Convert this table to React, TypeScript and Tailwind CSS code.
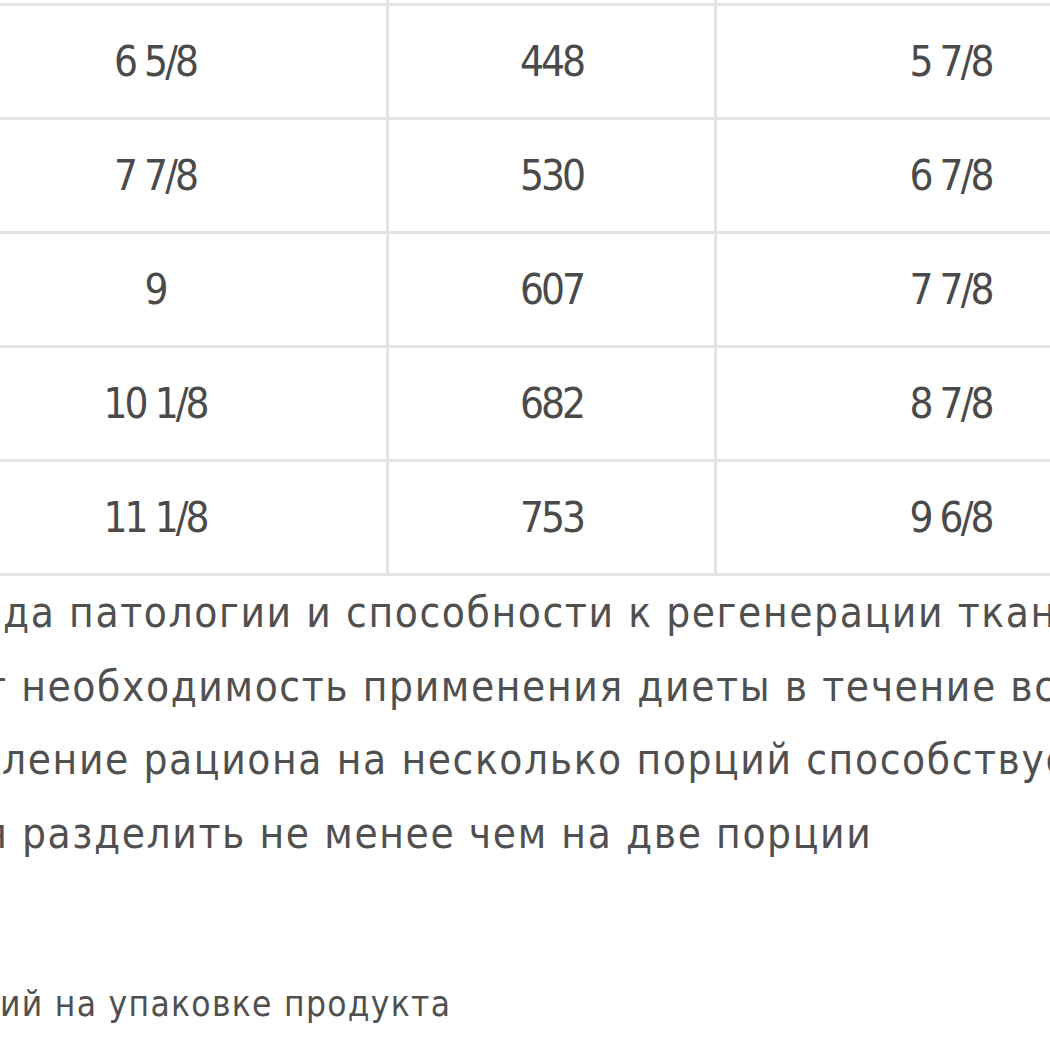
const rows: Array<[string, string, string]> = [
  ["", "", ""],
  ["6 5/8", "448", "5 7/8"],
  ["7 7/8", "530", "6 7/8"],
  ["9", "607", "7 7/8"],
  ["10 1/8", "682", "8 7/8"],
  ["11 1/8", "753", "9 6/8"],
];

const font = { fontFamily: '"DejaVu Sans Condensed", "DejaVu Sans", sans-serif' };

export default function App() {
  return (
    <div className="w-[1050px] h-[1050px] overflow-hidden bg-white text-[#4a4a4a]" style={font}>
      {/* table, clipped on both sides */}
      <div className="ml-[-76px] mt-[-108px] w-[1260px]">
        {rows.map((r, i) => (
          <div key={i} className="grid grid-cols-[465px_328px_467px] h-[114px] border-b-[3px] border-[#e4e4e4]">
            <div className="flex items-center justify-center border-r-[3px] border-[#e4e4e4] text-[42px] tracking-[-3px]">{r[0]}</div>
            <div className="flex items-center justify-center border-r-[3px] border-[#e4e4e4] text-[42px] tracking-[-3px]">{r[1]}</div>
            <div className="flex items-center justify-center text-[42px] tracking-[-3px]">{r[2]}</div>
          </div>
        ))}
      </div>

      <div className="whitespace-nowrap text-[42px] tracking-[1.6px] leading-[73.5px] text-[#505050]">
        <div className="ml-[3px]">да патологии и способности к регенерации тканей</div>
        <div className="ml-[-16px]">т необходимость применения диеты в течение всей</div>
        <div className="ml-[2px]">ление рациона на несколько порций способствует</div>
        <div className="ml-[-16px]">я разделить не менее чем на две порции</div>
      </div>

      <div className="mt-[114px] whitespace-nowrap text-[35px] tracking-[1.3px] leading-[40px] text-[#505050]">
        ий на упаковке продукта
      </div>
    </div>
  );
}
